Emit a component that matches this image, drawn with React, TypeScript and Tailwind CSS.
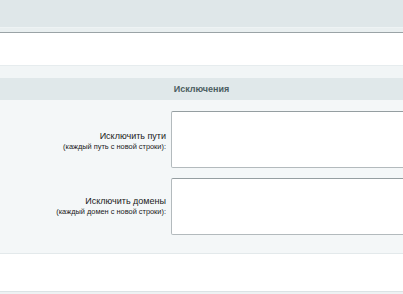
export default function App() {
  return (
    <div className="w-[403px] h-[294px] overflow-hidden bg-white" style={{ fontFamily: '"Liberation Sans", Arial, sans-serif' }}>
      <div className="h-[27px] bg-[#dfe7e9]" />
      <div className="h-[5px] bg-[#e9eff0] border-t border-[#eef3f4]" />
      <div className="h-[1px] bg-[#9aa3a6]" />
      <div className="h-[32px] bg-white" />
      <div className="h-[13px] bg-[#f1f5f6] border-t border-[#e6ecee]" />
      <div className="h-[22px] bg-[#e0e8ea] flex items-center justify-center">
        <span className="text-[9px] font-bold text-[#4b5d61] leading-none">Исключения</span>
      </div>
      <div className="h-[153px] bg-[#f4f7f8] flex flex-col pt-[11px] gap-[10px]">
        <div className="flex items-center h-[57px]">
          <div className="w-[166px] shrink-0 text-right pt-[3px]">
            <div className="text-[9px] leading-[11px] text-[#1a1a1a]">Исключить пути</div>
            <div className="text-[7.4px] leading-[10px] text-[#1a1a1a]">(каждый путь с новой строки):</div>
          </div>
          <div className="ml-[5px] w-[260px] shrink-0 h-[57px] bg-white border border-[#b3babd] border-t-[#959ea1] rounded-[2px]" />
        </div>
        <div className="flex items-center h-[57px]">
          <div className="w-[166px] shrink-0 text-right pb-[1px]">
            <div className="text-[9px] leading-[11px] text-[#1a1a1a]">Исключить домены</div>
            <div className="text-[7.4px] leading-[10px] text-[#1a1a1a]">(каждый домен с новой строки):</div>
          </div>
          <div className="ml-[5px] w-[260px] shrink-0 h-[57px] bg-white border border-[#b3babd] border-t-[#959ea1] rounded-[2px]" />
        </div>
      </div>
      <div className="h-[38px] bg-white border-t border-[#e3e9eb]" />
      <div className="h-[3px] bg-[#eef2f3] border-t border-[#dce3e5]" />
    </div>
  );
}
